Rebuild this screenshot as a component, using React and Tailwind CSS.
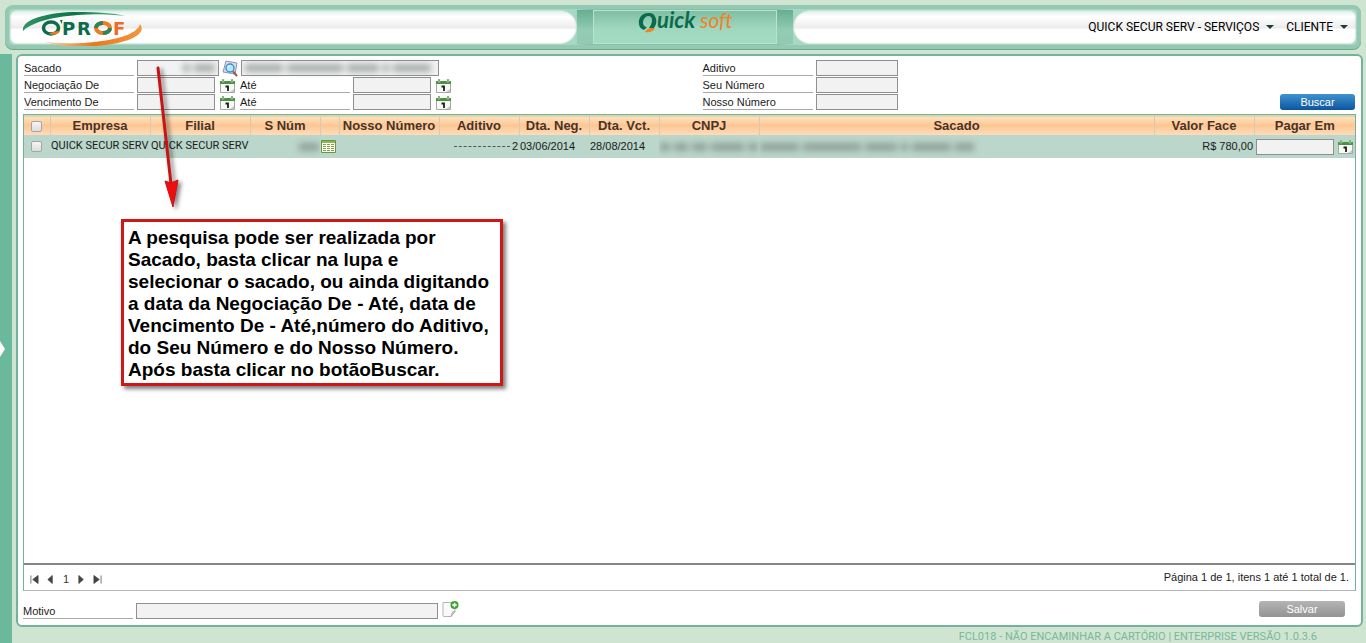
import React, { useState } from "react";

const columns = [
  { key: "empresa", label: "Empresa", width: "w-[100px]" },
  { key: "filial", label: "Filial", width: "w-[100px]" },
  { key: "snum", label: "S Núm", width: "w-[70px]" },
  { key: "detail", label: "", width: "w-[19px]" },
  { key: "nosso", label: "Nosso Número", width: "w-[100px]" },
  { key: "aditivo", label: "Aditivo", width: "w-[80px]" },
  { key: "neg", label: "Dta. Neg.", width: "w-[70px]" },
  { key: "vct", label: "Dta. Vct.", width: "w-[70px]" },
  { key: "cnpj", label: "CNPJ", width: "w-[100px]" },
  { key: "sacado", label: "Sacado", width: "" },
  { key: "valor", label: "Valor Face", width: "w-[100px]" },
  { key: "pagar", label: "Pagar Em", width: "w-[101px]" },
];

const boxClass =
  "h-4 border border-[#8f8f8f] bg-[#f2f2f2] px-1 text-[11px] outline-none";

function ProfLogo() {
  return (
    <svg width="124" height="38" viewBox="0 0 124 38" role="img" aria-label="Q'PROF">
      <defs>
        <linearGradient id="swooshGreen" x1="0" x2="1">
          <stop offset="0" stopColor="#2f9468" />
          <stop offset="0.5" stopColor="#0c7347" />
          <stop offset="1" stopColor="#5fae8b" />
        </linearGradient>
        <linearGradient id="swooshOrange" x1="0" x2="1">
          <stop offset="0" stopColor="#f9d3a8" />
          <stop offset="0.5" stopColor="#e9771f" />
          <stop offset="1" stopColor="#f3963f" />
        </linearGradient>
      </defs>
      <path
        d="M1 23C-1 12 24 4 56 4c18 0 36 1 47 4C86 6 70 6 56 7 28 9 9 15 1 23z"
        fill="url(#swooshGreen)"
      />
      <path
        d="M22 34c20 2 40 2 58-1 22-3 36-9 38-17 6 8-4 15-22 19-24 5-52 5-74-1z"
        fill="url(#swooshOrange)"
      />
      <ellipse cx="29" cy="20" rx="7.500" ry="6" fill="none" stroke="#0d6b4a" strokeWidth="3.5" />
      <path d="M27 26c3-2 7-3 11-3-1 3-7 5-11 3z" fill="#ee7a22" />
      <path d="M38 12h2.500l-1 4z" fill="#0d6b4a" />
      <g fontFamily="'DejaVu Sans', Verdana, sans-serif" fontWeight="700" fontSize="18">
        <text x="40" y="27" fill="#0d6b4a">P</text>
        <text x="55" y="27" fill="#0d6b4a">R</text>
        <text x="91" y="27" fill="#ee6a28">F</text>
      </g>
      <ellipse cx="81" cy="20" rx="7" ry="5" fill="none" stroke="#ee7a22" strokeWidth="4" />
      <path d="M74 20c0-3 3-5 7-5M88 20c0 3-3 5-7 5" fill="none" stroke="#2b8559" strokeWidth="4" />
    </svg>
  );
}

function QuicksoftLogo() {
  return (
    <svg width="100" height="28" viewBox="0 0 100 28" className="overflow-visible" role="img" aria-label="Quicksoft">
      <path
        d="M13 2C5 1 1 7 2 13c0 3 2 5 5 6l3-3c-4 0-5-5-3-8 2-4 8-4 8 1 0 3-1 5-3 8l4 1c3-3 4-7 3-10-1-4-3-6-6-6z"
        fill="#0b6b4c"
      />
      <path d="M8 21c2-4 5-4 10-4-1 3-5 5-10 4z" fill="#f08326" />
      <g fontFamily="Lato, sans-serif" fontStyle="italic">
        <text x="20" y="17" fill="#0b6b4c" fontWeight="700" fontSize="22">uick</text>
        <text x="63" y="17" fill="#f08326" fontSize="21">soft</text>
      </g>
    </svg>
  );
}

function CalendarIcon() {
  return (
    <svg width="15" height="14" viewBox="0 0 15 14" aria-hidden="true">
      <path d="M.5 4h14v9.500H.5z" fill="#f7faf5" stroke="#a3aba0" />
      <path d="M0 2h15v3H0z" fill="#4f8f47" />
      <path d="M2 0h2v3H2zM11 0h2v3h-2z" fill="#5aa64f" stroke="#c6dcc0" strokeWidth="0.5" />
      <path d="M5.500 7.500h2.500V12" fill="none" stroke="#1c211b" strokeWidth="1.8" />
      <path d="M10 13l4-3v3z" fill="#c5cbc2" />
    </svg>
  );
}

function SearchIcon() {
  return (
    <svg width="16" height="17" viewBox="0 0 16 17" aria-hidden="true">
      <path d="M4 1l11 2-2 11L1 12z" fill="#d9dcf0" stroke="#8d92b4" />
      <circle cx="8" cy="8" r="4" fill="#b5e8fb" stroke="#3c8fd0" strokeWidth="1.4" />
      <path d="M6 7.500c0-1 1-2 2-2" stroke="#fff" fill="none" />
      <path d="M11.500 12l3 3.500" stroke="#a65b35" strokeWidth="2" strokeLinecap="round" />
    </svg>
  );
}

function SheetIcon() {
  return (
    <svg width="15" height="13" viewBox="0 0 15 13" aria-hidden="true">
      <path d="M.5.5h14v12H.5z" fill="#fafdf0" stroke="#6f9440" />
      <path d="M1 1h13v2H1z" fill="#8fb452" />
      <path d="M2 4.500h11M2 6.500h11M2 8.500h11M2 10.500h11" stroke="#7fa04f" strokeDasharray="3 1" />
    </svg>
  );
}

function NoteAddIcon() {
  return (
    <svg width="17" height="17" viewBox="0 0 17 17" aria-hidden="true">
      <path d="M1 1.500h12v9l-4 5H2q-1 0-1-1z" fill="#fafafa" stroke="#b5b5b5" />
      <path d="M13 10.500l-4 5c1-2 1-4 1-4q1-1 3-1z" fill="#dedede" stroke="#999" strokeWidth="0.7" />
      <circle cx="12.500" cy="4" r="4" fill="#3ba32c" />
      <path d="M12.500 1.700v4.600M10.200 4h4.600" stroke="#fff" strokeWidth="1.500" />
    </svg>
  );
}

// Hidden personal data, shown as a blurred run of words
function Redacted({ words, className = "" }) {
  return (
    <span aria-hidden="true" className={`flex items-center gap-1 blur-[3px] ${className}`}>
      {words.map((grow, i) => (
        <span key={i} className="h-2 bg-[#74827c]/60" style={{ flexGrow: grow }} />
      ))}
    </span>
  );
}

function Label({ htmlFor, children }) {
  return (
    <label
      htmlFor={htmlFor}
      className="mr-[3px] h-4 w-[110px] shrink-0 border-b border-[#a9a9a9] leading-4"
    >
      {children}
    </label>
  );
}

function DateRange({ id, label }) {
  return (
    <div className="flex h-4 items-end">
      <Label htmlFor={`${id}-de`}>{label}</Label>
      <input id={`${id}-de`} type="text" className={`w-[78px] ${boxClass}`} />
      <button type="button" aria-label={`${label}: calendário`} className="mr-1 ml-[5px] w-4">
        <CalendarIcon />
      </button>
      <Label htmlFor={`${id}-ate`}>Até</Label>
      <input id={`${id}-ate`} type="text" className={`w-[78px] ${boxClass}`} />
      <button type="button" aria-label="Até: calendário" className="ml-[5px]">
        <CalendarIcon />
      </button>
    </div>
  );
}

function TextField({ id, label }) {
  return (
    <div className="flex h-4">
      <Label htmlFor={id}>{label}</Label>
      <input id={id} type="text" className={`w-[82px] ${boxClass}`} />
    </div>
  );
}

function Header() {
  const panel =
    "flex min-w-0 flex-1 items-center bg-[linear-gradient(to_bottom,#dceee6_0,#ffffff_20%,#ececec_52%,#ffffff_58%)] shadow-[inset_0_0_2px_#8fb7a6]";
  return (
    <header className="mx-[5px] flex h-11 shrink-0 rounded-lg border-4 border-[#94c8b2] bg-[#94c8b2] bg-[linear-gradient(to_right,#a5d9c3_42%,#83c0a6_43%,#83c0a6_57%,#a5d9c3_58%)] p-px shadow-[0_1px_0_#62aa8b]">
      <div className={`rounded-l-md rounded-r-[17px] pl-3 ${panel}`}>
        <ProfLogo />
      </div>
      <div className="flex w-[216px] shrink-0 justify-center bg-[linear-gradient(to_bottom,#68ad91,#92ccb4_60%,#94c8b2)] px-4">
        <div className="flex w-full justify-center border border-[#b9e2d1] bg-[linear-gradient(to_bottom,#7fbfa4,#9fd7bf_55%,#a2dac3)] pl-1">
          <QuicksoftLogo />
        </div>
      </div>
      <div className={`justify-end gap-3 rounded-l-[17px] rounded-r-md pr-2 font-[Roboto,sans-serif] text-xs ${panel}`}>
        <MenuButton>QUICK SECUR SERV - SERVIÇOS</MenuButton>
        <MenuButton>CLIENTE</MenuButton>
      </div>
    </header>
  );
}

function MenuButton({ children }) {
  return (
    <button type="button" className="flex items-center gap-[7px] text-black">
      {children}
      <span className="border-x-4 border-t-4 border-x-transparent border-t-[#1d3b37]" />
    </button>
  );
}

function Filters() {
  return (
    <form className="flex items-end px-1.5 py-1" onSubmit={(e) => e.preventDefault()}>
      <div className="flex w-1/2 flex-col gap-px">
        <div className="flex h-4 items-center">
          <Label htmlFor="sacado">Sacado</Label>
          <div className="relative">
            <input id="sacado" type="text" className={`block w-[82px] ${boxClass}`} />
            <Redacted words={[1, 3]} className="absolute inset-y-0 right-1 w-8" />
          </div>
          <button type="button" aria-label="Pesquisar sacado" className="mx-[3px]">
            <SearchIcon />
          </button>
          <div className="relative">
            <input aria-label="Nome do sacado" type="text" readOnly className={`block w-[198px] ${boxClass}`} />
            <Redacted words={[6, 9, 5, 1, 6]} className="absolute inset-y-0 left-1 w-[186px]" />
          </div>
        </div>
        <DateRange id="negociacao" label="Negociação De" />
        <DateRange id="vencimento" label="Vencimento De" />
      </div>
      <div className="flex flex-1 flex-col gap-px pl-[13px]">
        <TextField id="aditivo" label="Aditivo" />
        <TextField id="seu-numero" label="Seu Número" />
        <TextField id="nosso-numero" label="Nosso Número" />
      </div>
      <button
        type="submit"
        className="h-4 w-[75px] rounded-[3px] bg-linear-to-b from-[#3f93cf] to-[#0b55a0] leading-4 text-white"
      >
        Buscar
      </button>
    </form>
  );
}

function Grid() {
  const [checked, setChecked] = useState(false);
  const box =
    "ml-[7px] block size-[11px] appearance-none rounded-xs border border-[#a5a5a5] bg-linear-to-b from-[#f5f5f5] to-[#dddddd] checked:bg-[#6ab99c]";
  const cell = "overflow-hidden px-px py-0 text-left whitespace-nowrap";

  return (
    <section className="mx-[5px] flex min-h-0 flex-1 flex-col border border-[#72b39a] border-b-[#b5b5b5]">
      <table className="w-full table-fixed border-collapse">
        <thead>
          <tr className="h-[19px] bg-[linear-gradient(to_bottom,#ffe3c4,#fdc793_50%,#fddcba)] text-[13px] text-[#4a3226]">
            <th className="w-[26px] border-t-2 border-t-[#d9d6a8] p-0">
              <input
                type="checkbox"
                aria-label="Selecionar todos"
                className={box}
                checked={checked}
                onChange={(e) => setChecked(e.target.checked)}
              />
            </th>
            {columns.map((c) => (
              <th
                key={c.key}
                className={`border-t-2 border-l border-t-[#d9d6a8] border-l-[#d8c9b4] p-0 leading-4 font-bold whitespace-nowrap ${c.width}`}
              >
                {c.label}
              </th>
            ))}
          </tr>
        </thead>
        <tbody>
          <tr className="h-[23px] bg-[#bbd6ca]">
            <td className="p-0">
              <input
                type="checkbox"
                aria-label="Selecionar linha"
                className={box}
                checked={checked}
                onChange={(e) => setChecked(e.target.checked)}
              />
            </td>
            <td className={`font-[Roboto,sans-serif] ${cell}`}>QUICK SECUR SERV</td>
            <td className={`font-[Roboto,sans-serif] ${cell}`}>QUICK SECUR SERV</td>
            <td className={cell}>
              <Redacted words={[1]} className="ml-auto w-5" />
            </td>
            <td className="p-0">
              <button type="button" aria-label="Detalhes" className="block pl-px">
                <SheetIcon />
              </button>
            </td>
            <td className={cell}></td>
            <td className={cell}>
              <span className="flex items-center justify-end">
                <span className="mr-0.5 w-14 border-t border-dashed border-[#4c5a54]" />2
              </span>
            </td>
            <td className={cell}>03/06/2014</td>
            <td className={cell}>28/08/2014</td>
            <td className={cell}>
              <Redacted words={[2, 3, 3, 7, 2]} className="w-[98px]" />
            </td>
            <td className={cell}>
              <Redacted words={[6, 9, 5, 1, 6, 3]} className="w-[214px]" />
            </td>
            <td className="px-px py-0 text-right">R$ 780,00</td>
            <td className="p-0">
              <span className="flex items-center justify-between px-0.5">
                <input type="text" aria-label="Pagar Em" className={`w-[78px] ${boxClass}`} />
                <button type="button" aria-label="Pagar Em: calendário">
                  <CalendarIcon />
                </button>
              </span>
            </td>
          </tr>
        </tbody>
      </table>

      <div className="mt-auto flex h-[27px] items-center justify-between border-t-2 border-[#858585] px-1.5">
        <nav aria-label="Páginas" className="flex items-center gap-[7px] pt-1 text-[#333333]">
          <PageButton label="Primeira" d="M1 0v9M9 0v9L3 4.500z" />
          <PageButton label="Anterior" d="M7 0v9L2 4.500z" />
          <span className="px-px">1</span>
          <PageButton label="Próxima" d="M2 0v9l5-4.500z" />
          <PageButton label="Última" d="M9 0v9M1 0v9l6-4.500z" />
        </nav>
        <span>Página 1 de 1, itens 1 até 1 total de 1.</span>
      </div>
    </section>
  );
}

function PageButton({ label, d }) {
  return (
    <button type="button" aria-label={label}>
      <svg width="9" height="9" viewBox="0 0 10 9" className="block">
        <path d={d} fill="#444" stroke="#444" strokeWidth="0.8" />
      </svg>
    </button>
  );
}

function Callout() {
  return (
    <>
      <svg
        className="pointer-events-none absolute top-[60px] left-[150px] drop-shadow-[3px_2px_2px_rgba(0,0,0,0.5)]"
        width="36"
        height="152"
        viewBox="0 0 36 152"
        aria-hidden="true"
      >
        <path d="M8 8l13 116" stroke="#c81414" strokeWidth="3" strokeLinecap="round" />
        <path d="M15 121l6 2 7-3-5 27z" fill="#f00d0d" stroke="#c81414" />
      </svg>
      <div className="absolute top-[219px] left-[121px] w-[382px] border-3 border-[#cf1717] bg-white pt-[5px] pb-0.5 pl-1 text-[19px] leading-[22px] font-bold whitespace-nowrap text-black shadow-[3px_3px_4px_rgba(0,0,0,0.5)]">
        <p>A pesquisa pode ser realizada por</p>
        <p>Sacado, basta clicar na lupa e</p>
        <p>selecionar o sacado, ou ainda digitando</p>
        <p>a data da Negociação De - Até, data de</p>
        <p>Vencimento De - Até,número do Aditivo,</p>
        <p>do Seu Número e do Nosso Número.</p>
        <p>Após basta clicar no botãoBuscar.</p>
      </div>
    </>
  );
}

export default function App() {
  return (
    <div className="relative flex h-screen flex-col overflow-hidden bg-[#cfe5d1] pt-[5px] font-['Liberation_Sans',Arial,sans-serif] text-[11px] text-[#1a1a1a]">
      <Header />
      <div className="mt-[5px] flex min-h-0 flex-1">
        <aside className="flex w-3 shrink-0 items-center bg-[#6ab99c]">
          <button
            type="button"
            aria-label="Abrir menu"
            className="border-y-8 border-l-5 border-y-transparent border-l-white"
          />
        </aside>
        <div className="flex min-w-0 flex-1 flex-col pr-[3px] pl-1">
          <main className="flex min-h-0 flex-1 flex-col rounded-md border-2 border-[#72b39a] bg-white">
            <Filters />
            <Grid />
            <form className="flex h-[34px] items-end px-[5px] pb-1.5" onSubmit={(e) => e.preventDefault()}>
              <Label htmlFor="motivo">Motivo</Label>
              <input id="motivo" type="text" className={`w-[302px] ${boxClass}`} />
              <button type="button" aria-label="Adicionar motivo" className="mt-2.5 ml-1 self-start">
                <NoteAddIcon />
              </button>
              <button
                type="submit"
                className="mt-2.5 mr-[11px] ml-auto h-4 w-[86px] self-start rounded-[3px] bg-linear-to-b from-[#b5b5b5] to-[#939393] leading-4 text-white"
              >
                Salvar
              </button>
            </form>
          </main>
          <footer className="h-4 pt-0.5 pr-[46px] text-right font-[Roboto,sans-serif] leading-4 text-[#79b79c]">
            FCL018 - NÃO ENCAMINHAR A CARTÓRIO | ENTERPRISE VERSÃO 1.0.3.6
          </footer>
        </div>
      </div>
      <Callout />
    </div>
  );
}
